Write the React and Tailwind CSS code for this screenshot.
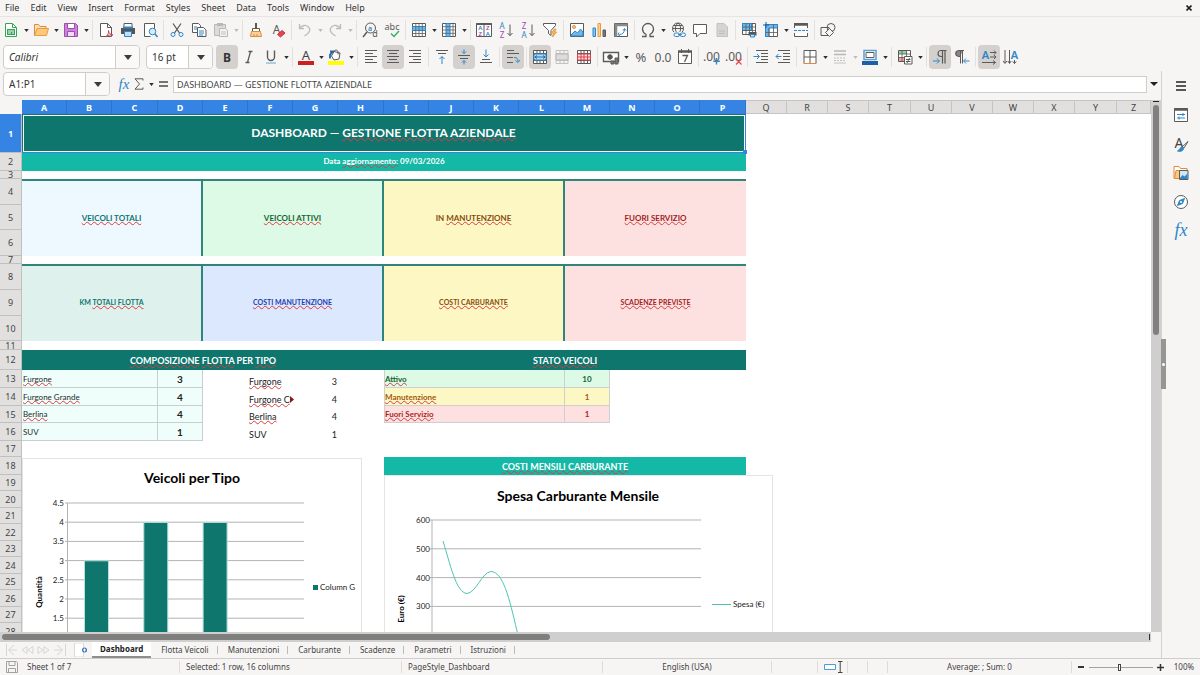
import { useState } from "react";

const MENUS = ["File", "Edit", "View", "Insert", "Format", "Styles", "Sheet", "Data", "Tools", "Window", "Help"];
const TABS = ["Dashboard", "Flotta Veicoli", "Manutenzioni", "Carburante", "Scadenze", "Parametri", "Istruzioni"];

// column widths A..Y, Z takes what is left
const COLS = [
  45, 45, 46, 45, 45, 45, 45, 46, 45, 45, 45, 46, 45, 45, 45, 46,
  41, 41, 41, 42, 41, 41, 41, 41, 42,
];
const LETTERS = "ABCDEFGHIJKLMNOPQRSTUVWXYZ".split("");
const ROW_HEIGHTS = [
  39, 18, 8, 26, 25, 26, 8, 26, 26, 25, 9, 20, 18, 18, 17, 18, 16, 18, 16, 17, 16, 17, 16, 17, 16, 17, 16, 17,
];

const G = "#5a5a58";
const B = "#2f86c8";

function Icon({ children, size = 16 }) {
  return (
    <svg width={size} height={size} viewBox="0 0 16 16" fill="none" stroke={G} strokeWidth="1" className="shrink-0 overflow-visible">
      {children}
    </svg>
  );
}

function T({ children, x = 8, y = 13, size = 14, fill = G, weight = 400, family = "Noto Sans", ...rest }) {
  return (
    <text x={x} y={y} fontSize={size} fill={fill} stroke="none" textAnchor="middle" fontFamily={`"${family}", sans-serif`} fontWeight={weight} {...rest}>
      {children}
    </text>
  );
}

const icons = {
  new: (
    <>
      <path d="M2.5 1.5h7l4 4v9h-11z" stroke="#35a455" fill="#fff" />
      <path d="M9.5 1.5v4h4" stroke="#35a455" />
      <path d="M4 7h8v6H4z" fill="#35a455" stroke="none" />
      <path d="M5 9h6M5 11h3M9 11h2" stroke="#fff" />
    </>
  ),
  open: (
    <>
      <path d="M1.5 13.5v-11h4l1.500 2h6v3" stroke="#e08a3c" fill="#fde3b4" />
      <path d="M1.500 13.500 4 6.500h11.500l-2 7z" stroke="#e89a4a" fill="#fbc978" />
    </>
  ),
  save: (
    <>
      <path d="M1.500 1.500h11l2 2v11h-13z" stroke="#9b4fb0" fill="#c983d8" />
      <path d="M4.500 1.500h7v5h-7z" fill="#fff" stroke="#9b4fb0" />
      <path d="M4.500 14.500v-5h7v5z" fill="#f1daf5" stroke="#9b4fb0" />
    </>
  ),
  pdf: (
    <>
      <path d="M2.500 1.500h7l4 4v9h-11z" fill="#fff" />
      <path d="M9.500 1.500v4h4" />
      <path d="M8 14.500c2-1.500 3-4 2.500-6 0 2.500 2 4.500 4.500 4.500-2.500-.5-5 .3-7 1.500z" stroke="#d8404a" />
    </>
  ),
  print: (
    <>
      <path d="M4 6V1.500h8V6" fill="#fff" />
      <path d="M1 6h14v6H1z" fill="#555" stroke="none" />
      <path d="M3 4.500h10v2H3z" fill={B} stroke="none" />
      <path d="M4.500 9.500h7v5h-7z" fill="#bfe0f5" stroke={B} />
    </>
  ),
  preview: (
    <>
      <path d="M12.500 7V1.500h-10v13h6" fill="#fff" />
      <circle cx="10.500" cy="9.500" r="3.300" stroke={B} fill="#d5ebf8" />
      <path d="m13 12 2.500 3" stroke={B} strokeWidth="1.500" />
    </>
  ),
  cut: (
    <>
      <path d="M4 1.500 10.500 11M12 1.500 5.500 11" strokeWidth="1.300" />
      <circle cx="4" cy="12.500" r="2" stroke={B} />
      <circle cx="12" cy="12.500" r="2" stroke={B} />
    </>
  ),
  copy: (
    <>
      <path d="M1.500 1.500h6l2 2v7h-8z" fill="#fff" />
      <path d="M3 5h3M3 7h3" stroke={B} />
      <path d="M6.500 5.500h6l2.500 2.500v6.500H6.500z" fill="#fff" />
      <path d="M8 9h5M8 11h5M8 13h4" stroke={B} />
    </>
  ),
  paste: (
    <>
      <path d="M1.500 2.500h11v11h-11z" fill="#dcdbd9" stroke="#b9b8b6" />
      <path d="M4 1h6v3H4z" fill="#b9b8b6" stroke="none" />
      <path d="M6.500 6.500h6l2 2v6h-8z" fill="#f3f2f1" stroke="#b9b8b6" />
      <path d="M8 10h5M8 12h5" stroke="#c4c3c1" />
    </>
  ),
  clone: (
    <>
      <path d="M8 1v6" strokeWidth="2" />
      <path d="M4.500 6.500h7v3h-7z" fill="#fff" />
      <path d="M3.500 9.500h9l1 5h-11z" fill="#fbd09a" stroke="#e08a3c" />
      <path d="M6 12v2M9 12v2" stroke="#e08a3c" />
    </>
  ),
  clear: (
    <>
      <T x={6.500} y={12} size={12}>A</T>
      <path d="m7.500 12.500 4.500-4 3 2.500-4.500 4z" fill="#e5484f" stroke="#c8323c" />
    </>
  ),
  undo: <path d="M2.500 2v4.500H7M2.500 6.500C5 3 9 2.500 11.500 5s1.500 6-4 9" stroke="#bdbcba" strokeWidth="1.300" />,
  redo: <path d="M13.500 2v4.500H9M13.500 6.500C11 3 7 2.500 4.500 5s-1.500 6 4 9" stroke="#bdbcba" strokeWidth="1.300" />,
  find: (
    <>
      <circle cx="8.500" cy="6" r="5" />
      <path d="M5 10 1 15" strokeWidth="1.500" />
      <T x={8} y={8.500} size={7} fill={B} weight={600}>a</T>
      <T x={13} y={15} size={9}>d</T>
    </>
  ),
  spell: (
    <>
      <T x={8} y={8} size={9}>abc</T>
      <path d="m7 11.500 3 3 5-5.500" stroke="#2fae5c" strokeWidth="1.300" />
    </>
  ),
  row: (
    <>
      <path d="M1.500 1.500h13v13h-13z" fill="#fff" />
      <path d="M1.500 4.500h13v4h-13z" fill="#6db7ea" stroke={B} />
      <path d="M1.500 11.500h13M4.800 1.500v13M8 1.500v13M11.300 1.500v13" strokeWidth=".8" />
    </>
  ),
  col: (
    <>
      <path d="M1.500 1.500h13v13h-13z" fill="#fff" />
      <path d="M5 1.500h4v13H5z" fill="#6db7ea" stroke={B} />
      <path d="M1.500 4.700h13M1.500 8h13M1.500 11.300h13M12 1.500v13" strokeWidth=".8" />
    </>
  ),
  sort: (
    <>
      <path d="M.5 1.500h15v13H.5z" fill="#fff" />
      <path d="M.5 2h15" strokeWidth="2" />
      <path d="M8 1.500v13" />
      <T x={4.300} y={8} size={6} fill={B} weight={600}>A</T>
      <T x={4.300} y={14} size={6} fill="#a348b5" weight={600}>Z</T>
      <T x={11.800} y={8} size={6} fill="#a348b5" weight={600}>Z</T>
      <T x={11.800} y={14} size={6} fill={B} weight={600}>A</T>
    </>
  ),
  asc: (
    <>
      <T x={4} y={7} size={8} fill={B}>A</T>
      <T x={4} y={15.500} size={8} fill="#a348b5">Z</T>
      <path d="M12 2.500v11M9.500 11l2.500 2.700L14.500 11" />
    </>
  ),
  desc: (
    <>
      <T x={4} y={7} size={8} fill="#a348b5">Z</T>
      <T x={4} y={15.500} size={8} fill={B}>A</T>
      <path d="M12 2.500v11M9.500 11l2.500 2.700L14.500 11" />
    </>
  ),
  filter: (
    <>
      <path d="M1.500 1.500h12v2L9 8.500v5l-2.500-2v-3l-5-5z" fill="#fff" />
      <path d="m12.500 7-3 4h2l-1 4 4-5h-2l1.500-3z" fill="#fbc26b" stroke="#e89a3a" />
    </>
  ),
  image: (
    <>
      <path d="M1.500 1.500h13v13h-13z" fill="#fff" />
      <path d="m2 13 4-4 2.500 2 3-4 2.500 3v4H2z" fill="#6db7ea" stroke={B} />
      <circle cx="5" cy="5" r="1.500" stroke="#e08a3c" fill="#fbd09a" />
    </>
  ),
  chart: (
    <>
      <path d="M2 6h2.500v8.500H2z" fill="#8cc6ee" stroke={B} />
      <path d="M7 1.500h2.500v13H7z" fill="#fbd09a" stroke="#e89a3a" />
      <path d="M12 8h2.500v6.500H12z" fill="#777" />
    </>
  ),
  pivot: (
    <>
      <path d="M1.500 1.500h13v13h-13z" fill="#fff" />
      <path d="M1.500 3h13M3 1.500v13" strokeWidth="2.500" stroke="#8a8a88" />
      <path d="M6.500 12.500c3 0 5-2 5-5.500M6 10.500l-1 2 2 1.500M10 8.500l1.500-2 1.500 2" stroke={B} />
    </>
  ),
  omega: <path d="M2 14.500h4v-2C3.500 11 2.500 9 2.500 7a5.500 5.500 0 0 1 11 0c0 2-1 4-3.500 5.500v2h4" strokeWidth="1.300" />,
  link: (
    <>
      <circle cx="8" cy="6.500" r="5.500" />
      <path d="M2.500 6.500h11M8 1c-3.500 3-3.500 8 0 11M8 1c3.500 3 3.500 8 0 11M3.500 3.500h9" />
      <path d="M3.500 10h12v5h-12z" fill="#f6f5f4" stroke="none" />
      <rect x="4" y="11" width="5.500" height="3.500" rx="1.700" stroke={B} />
      <rect x="10" y="11" width="5.500" height="3.500" rx="1.700" stroke={B} />
      <path d="M8 12.700h4" stroke={B} />
    </>
  ),
  comment: <path d="M1.500 2.500h13v9H8l-3.500 3.500v-3.500h-3z" fill="#fff" />,
  page: (
    <>
      <path d="M3 1.500h7l3.500 3.500v9.500H3z" fill="#d5d4d2" stroke="#c3c2c0" />
      <path d="M5 9h6M5 11.500h6" stroke="#bdbcba" />
    </>
  ),
  printArea: (
    <>
      <path d="M1.500 1.500h13v11h-13z" fill="#fff" />
      <path d="M1.500 1.500h9v7h-9z" fill="#6db7ea" stroke={B} />
      <path d="M1.500 5h13M1.500 8.500h13M5 1.500v11M8.500 1.500v11M11.500 1.500v11" strokeWidth=".8" />
      <path d="M7.500 10h8v3.500h-8z" fill="#555" stroke="none" />
      <path d="M9.500 12.500h4v2.500h-4z" fill="#bfe0f5" stroke={B} />
    </>
  ),
  freeze: (
    <>
      <path d="M2.500 2.500h12v12h-12z" fill="#fff" />
      <path d="M2.500 2.500h12v3.500h-8.500v8.500h-3.500z" fill="#6db7ea" stroke={B} />
      <path d="M6 6v8.500M10.500 2.500v12M6 10.500h8.500M2.500 10.500h3.500" strokeWidth=".8" />
      <path d="M3 0v6M0 3h6" stroke="#1e5f9c" />
    </>
  ),
  split: (
    <>
      <path d="M1.500 6V1.500h13V6M1.500 11v3.500h13V11" fill="#fff" />
      <path d="M1 2.500h14" strokeWidth="2.500" />
      <path d="M1 8.500h14" stroke={B} strokeDasharray="3 1" />
    </>
  ),
  shapes: (
    <>
      <path d="M1 5.500h8v8H1z" fill="#f6f5f4" />
      <circle cx="11" cy="5.500" r="4" />
      <path d="m9.500 6.500 4 4-4 4-4-4z" fill="#f6f5f4" />
    </>
  ),
  bold: <T x={8} y={12.500} size={12} weight={700} fill="#333">B</T>,
  italic: <path d="M7.500 2.500h4M4.500 13.500h4M9.500 2.500l-3 11" strokeWidth="1.300" />,
  underline: (
    <>
      <path d="M4.500 1.500V8a3.500 3.500 0 0 0 7 0V1.500" strokeWidth="1.400" />
      <path d="M3 14h10" stroke="#62a8de" />
    </>
  ),
  fontColor: (
    <>
      <T x={8} y={10.500} size={13} fill="#444">A</T>
      <path d="M0 14h16" stroke="#c9211e" strokeWidth="4" />
    </>
  ),
  highlight: (
    <>
      <path d="m6 2.500 6 1.500-1 6-5 1-2.500-4z" fill="#fff" />
      <path d="M6 2.500c2-3 5-1 4 3" />
      <path d="M2 2.500h3l-3 3v4" stroke="#1e6ca8" strokeWidth="1.800" />
      <path d="M0 14h16" stroke="#ffff00" strokeWidth="4" />
    </>
  ),
  left: <path d="M2 1.500h12M2 4.500h8M2 7.500h12M2 10.500h8M2 13.500h12" />,
  center: <path d="M2 1.500h12M4 4.500h8M2 7.500h12M4 10.500h8M2 13.500h12" />,
  right: <path d="M2 1.500h12M6 4.500h8M2 7.500h12M6 10.500h8M2 13.500h12" />,
  top: (
    <>
      <path d="M2 1.500h12M4 4.500h8" />
      <path d="M8 15V7.500M5.500 10 8 7.500l2.500 2.500" stroke={B} />
    </>
  ),
  middle: (
    <>
      <path d="M2 6.500h12M4 9.500h8" />
      <path d="M8 .5v4M6 2.500l2 2 2-2M8 15.500v-4M6 13.500l2-2 2 2" stroke={B} />
    </>
  ),
  bottom: (
    <>
      <path d="M4 10.500h8M2 13.500h12" />
      <path d="M8 .5V8M5.500 5.500 8 8l2.500-2.500" stroke={B} />
    </>
  ),
  wrap: (
    <>
      <path d="M2 1.500h7M2 4.500h12M2 8.500h6M2 13.500h6" />
      <path d="M9 8.500c3 0 4 1 4 4M10.500 11.500l2.500 2 2-2.500" stroke={B} />
    </>
  ),
  merge: (
    <>
      <path d="M1.500 1.500h13v13h-13z" fill="#fff" />
      <path d="M1.500 4.500h13M1.500 11.500h13M5 1.500v3M8 1.500v3M11.500 1.500v3M5 11.500v3M8 11.500v3M11.500 11.500v3" />
      <path d="M2 5h12v6H2z" fill="#b5daf3" stroke={B} />
      <path d="M3 8h10M5 6.500 3 8l2 1.500M11 6.500 13 8l-2 1.500" stroke="#1e6ca8" />
    </>
  ),
  mergeOff: (
    <>
      <path d="M2 1.500h12v13H2z" stroke="#c3c2c0" />
      <path d="M2 4.500h12M2 11.500h12M6 1.500v3M10 1.500v3M6 11.500v3M10 11.500v3" stroke="#c3c2c0" />
      <path d="M2 5h12v6H2z" fill="#dddcda" stroke="#b9b8b6" />
    </>
  ),
  unmerge: (
    <>
      <path d="M1.500 1.500h13v13h-13z" fill="#fff" />
      <path d="M1.500 4.500h13M1.500 11.500h13M5 1.500v3M8 1.500v3M11.500 1.500v3M5 11.500v3M8 11.500v3M11.500 11.500v3" />
      <path d="M1.500 5h13v6h-13zM5 5v6M8 5v6M11.500 5v6M1.500 8h13" stroke="#d8404a" fill="#fbe0e1" />
    </>
  ),
  currency: (
    <>
      <path d="M.5 3.500h15v9H.5z" fill="#fff" strokeWidth="1.400" />
      <circle cx="7" cy="8" r="2.300" fill="#555" />
      <path d="M8 15v-3h3v3zM12 15V9h3v6z" fill="#777" />
    </>
  ),
  percent: <T x={8} y={13} size={13}>%</T>,
  number: <T x={8} y={13} size={12}>0.0</T>,
  date: (
    <>
      <path d="M1.500 2.500h13v12h-13z" fill="#fff" />
      <path d="M1 2.500h14" strokeWidth="2.500" />
      <path d="M4.500 0v4M11.500 0v4" />
      <path d="M5.500 6.500h5l-3 6.500" strokeWidth="1.300" />
    </>
  ),
  addDec: (
    <>
      <T x={7.500} y={12} size={12}>.00</T>
      <path d="M12.500 9v6.500M9.300 12.300h6.500" stroke={B} strokeWidth="1.400" />
    </>
  ),
  delDec: (
    <>
      <T x={7.500} y={12} size={12}>.00</T>
      <path d="m10 10 5.500 5.500M15.500 10 10 15.500" stroke="#e5484f" strokeWidth="1.200" />
    </>
  ),
  indent: (
    <>
      <path d="M3 1.500h12M8 4.500h7M8 7.500h7M8 10.500h7M3 13.500h12" />
      <path d="M.5 7.500h5.500M4 5l2.500 2.500L4 10" stroke={B} />
    </>
  ),
  outdent: (
    <>
      <path d="M3 1.500h12M8 4.500h7M8 7.500h7M8 10.500h7M3 13.500h12" />
      <path d="M6.500 7.500H1M3.500 5 1 7.500 3.500 10" stroke={B} />
    </>
  ),
  borders: (
    <>
      <path d="M2 14V1.500h12V14M2 8h12M8 1.500V14" fill="#fff" />
      <path d="M1.500 14.500h13" stroke="#e08a3c" />
    </>
  ),
  lineStyle: (
    <>
      <path d="M2 2h12M2 5.500h12" stroke="#b9b8b6" strokeWidth="1.600" />
      <path d="M2 9h12M2 11.500h12" stroke="#c3c2c0" strokeDasharray="2 1" />
      <path d="M2 14h12" stroke="#c3c2c0" />
    </>
  ),
  lineColor: (
    <>
      <path d="M2 1.500h12v9H2z" fill="#fff" stroke="#5d9fd2" strokeWidth="1.500" />
      <path d="M4 3.500h8v5H4z" />
      <path d="M0 14h16" stroke="#1f5fa5" strokeWidth="4" />
    </>
  ),
  conditional: (
    <>
      <path d="M1.500 1.500h12v11h-12z" fill="#fff" />
      <path d="M2 2h8v3H2z" fill="#8ed39b" stroke="none" />
      <path d="M2 8h5v4H2z" fill="#f1a0a3" stroke="none" />
      <path d="M1.500 5h12M1.500 8.500h12M5 1.500v11M9.500 1.500v11" strokeWidth=".8" />
      <path d="M7.500 7.500h7.500v7.500H7.500z" fill="#fff" />
      <path d="M9 10.500h4.500M9 12.500h4.500M12.500 9 10 14" />
    </>
  ),
  ltr: (
    <>
      <path d="M14.500 1.500H9a3 3 0 0 0 0 6h1M10.500 1.500v13M13 1.500v13" strokeWidth="1.200" />
      <path d="M1 12h6M5 9.500 7.500 12 5 14.500" stroke={B} />
    </>
  ),
  rtl: (
    <>
      <path d="M8.500 1.500H4a3 3 0 0 0 0 6h2.500z" fill="#888" stroke="none" />
      <path d="M10 1.500H5a3 3 0 0 0 0 6h1M6.500 1.500v13M8.500 1.500v13" />
      <path d="M15.500 12H10M12 9.500 9.500 12l2.500 2.500" stroke={B} />
    </>
  ),
  horiz: (
    <>
      <T x={4.500} y={10} size={11} fill={B} weight={600}>A</T>
      <path d="M9 3.500h6M13 1.500l2 2-2 2M9 8h6M13 6l2 2-2 2M1 13.500h13.500M12 11.500l2.500 2-2.500 2" />
    </>
  ),
  vert: (
    <>
      <T x={11.500} y={9.500} size={11} fill={B} weight={600}>A</T>
      <path d="M2 1v13M0 12l2 2.500L4 12M6.500 1v13M4.800 12l1.700 2.500 1.700-2.500M11.500 11v3.500M9.800 12.500l1.700 2 1.700-2" />
    </>
  ),
};

const BAR1 = [
  "new+", "open+", "save+", "|", "pdf", "print", "preview", "|", "cut", "copy", "paste-", "|", "clone", "clear", "|",
  "undo-", "redo-", "|", "find", "spell", "|", "row+", "col+", "|", "sort", "asc", "desc", "filter", "|", "image",
  "chart", "pivot", "|", "omega+", "link", "comment", "page", "|", "printArea", "freeze+", "split", "|", "shapes",
];
const BAR2 = [
  "*bold", "italic", "underline+", "|", "fontColor+", "highlight+", "|", "left", "*center", "right", "|", "top",
  "*middle", "bottom", "|", "*wrap", "|", "*merge", "mergeOff", "unmerge", "|", "currency+", "percent", "number",
  "date", "|", "addDec", "delDec", "|", "indent", "outdent", "|", "borders+", "lineStyle-", "lineColor+", "|",
  "conditional+", "|", "*ltr", "rtl", "|", "*horiz", "vert",
];

function Caret({ className = "text-[#2e2e2e]" }) {
  return (
    <svg width="5" height="3" viewBox="0 0 6 4" className={className}>
      <path d="M0 0h6L3 4z" fill="currentColor" />
    </svg>
  );
}

// "+" after a name adds an arrow, "-" a disabled arrow, "*" before it means pressed
function ToolItem({ item }) {
  if (item === "|") {
    return (
      <span className="w-[5px] flex justify-center shrink-0">
        <span className="w-px h-5 bg-[#e3e1df]" />
      </span>
    );
  }
  const pressed = item.startsWith("*");
  const name = item.replace(/[*+-]/g, "");
  const arrow = item.endsWith("+") || item.endsWith("-");
  const off = item.endsWith("-");
  return (
    <>
      <button
        type="button"
        aria-label={name}
        aria-pressed={pressed}
        className={`w-[22px] h-6 flex items-center justify-center rounded shrink-0 ${pressed ? "bg-[#d3d0cd]" : ""}`}
      >
        <Icon>{icons[name]}</Icon>
      </button>
      {arrow && (
        <button type="button" aria-label={`${name} options`} disabled={off} className="w-2 h-6 flex items-center justify-center shrink-0">
          <Caret className={off ? "text-[#bdbcba]" : "text-[#2e2e2e]"} />
        </button>
      )}
    </>
  );
}

function Combo({ label, value, width, italic }) {
  return (
    <div className={`flex h-6 bg-white border border-[#cfccc9] rounded shrink-0 overflow-hidden ${width}`}>
      <input aria-label={label} defaultValue={value} className={`flex-1 min-w-0 pl-[5px] text-[10px] text-[#333] outline-none ${italic ? "italic" : ""}`} />
      <button type="button" aria-label={`${label} list`} className="w-6 border-l border-[#cfccc9] bg-[#faf9f8] flex items-center justify-center">
        <svg width="8" height="5" viewBox="0 0 8 5">
          <path d="M0 0h8L4 5z" fill="#3c3c3c" />
        </svg>
      </button>
    </div>
  );
}

function Wavy({ children }) {
  return <span className="underline decoration-wavy decoration-[#dc3c3e] decoration-1 underline-offset-0 [text-decoration-skip-ink:none]">{children}</span>;
}

function Kpi({ text, plain, className }) {
  return (
    <td colSpan={4} rowSpan={3} className={`border-t-2 border-[#2f857c] text-center font-bold ${className}`}>
      <div className="pb-[2px]">
        {plain} <Wavy>{text}</Wavy>
      </div>
    </td>
  );
}

function Empty({ span = 1 }) {
  return <td colSpan={span} />;
}

const KPI_1 = [
  { text: "VEICOLI TOTALI", className: "border-r-2 text-[8px] bg-[#eef8ff] text-[#0f766e]" },
  { text: "VEICOLI ATTIVI", className: "border-r-2 text-[8px] bg-[#dcfae5] text-[#166534]" },
  { plain: "IN", text: "MANUTENZIONE", className: "border-r-2 text-[8px] bg-[#fdf7c4] text-[#854d0e]" },
  { text: "FUORI SERVIZIO", className: "text-[8px] bg-[#fde1e1] text-[#a11d1d]" },
];
const KPI_2 = [
  { plain: "KM", text: "TOTALI FLOTTA", className: "border-r-2 text-[7px] bg-[#dff1ed] text-[#0f766e]" },
  { text: "COSTI MANUTENZIONE", className: "border-r-2 text-[7px] bg-[#dbe8fe] text-[#1e40af]" },
  { text: "COSTI CARBURANTE", className: "border-r-2 text-[7px] bg-[#fdf7c4] text-[#854d0e]" },
  { text: "SCADENZE PREVISTE", className: "text-[7px] bg-[#fde1e1] text-[#a11d1d]" },
];
const TIPI = [
  ["Furgone", 3],
  ["Furgone Grande", 4],
  ["Berlina", 4],
  ["SUV", 1],
];
const STATI = [
  ["Attivo", 10, "bg-[#dcfae5] text-[#166534]"],
  ["Manutenzione", 1, "bg-[#fdf7c4] text-[#a1570e]"],
  ["Fuori Servizio", 1, "bg-[#fde1e1] text-[#b01c1c]"],
];

function TipoRow({ i }) {
  const [tipo, n] = TIPI[i];
  const stato = STATI[i];
  const label = tipo === "SUV" ? tipo : <Wavy>{tipo}</Wavy>;
  return (
    <>
      <td colSpan={3} className="bg-[#effefb] border-r border-b border-[#c9cfce] text-[8px] text-[#1d2b2a]">
        <div className="pl-px">{label}</div>
      </td>
      <td className="bg-[#effefb] border-r border-b border-[#c9cfce] text-center text-[10px] font-bold text-[#222]">{n}</td>
      <Empty />
      <td className="align-bottom text-[9px] text-[#222]">
        <div className="flex items-center pl-px pb-[2px]">
          {tipo === "Furgone Grande" ? (
            <>
              <Wavy>Furgone C</Wavy>
              <svg width="4" height="7" viewBox="0 0 4 7" className="shrink-0">
                <path d="M0 0v7l4-3.500z" fill="#8c1616" />
              </svg>
            </>
          ) : (
            label
          )}
        </div>
      </td>
      <td className="align-bottom text-right text-[9px] text-[#222]">
        <div className="pr-px pb-[2px]">{n}</div>
      </td>
      <Empty />
      {stato ? (
        <>
          <td colSpan={4} className={`border-r border-b border-l border-[#cfcfcf] text-[8px] font-bold ${stato[2]}`}>
            <Wavy>{stato[0]}</Wavy>
          </td>
          <td className={`border-r border-b border-[#cfcfcf] text-center text-[8px] font-bold ${stato[2]}`}>{stato[1]}</td>
          <Empty span={13} />
        </>
      ) : (
        <Empty span={18} />
      )}
    </>
  );
}

function rowCells(n) {
  switch (n) {
    case 1:
      return (
        <>
          <td colSpan={16} className="relative bg-[#0f766e] text-white text-center text-[12px] font-bold outline outline-1 outline-white -outline-offset-2 border-b-2 border-r border-[#3584e4]">
            DASHBOARD — <Wavy>GESTIONE FLOTTA AZIENDALE</Wavy>
            <span className="absolute -right-[2px] -bottom-[3px] size-1 bg-[#3584e4]" />
          </td>
          <Empty span={10} />
        </>
      );
    case 2:
      return (
        <>
          <td colSpan={16} className="bg-[#14b8a6] text-white text-center text-[8px] font-bold">
            <div className="pb-[2px]">
              Data <Wavy>aggiornamento:</Wavy> 09/03/2026
            </div>
          </td>
          <Empty span={10} />
        </>
      );
    case 4:
    case 8:
      return (
        <>
          {(n === 4 ? KPI_1 : KPI_2).map((k) => (
            <Kpi key={k.text} {...k} />
          ))}
          <Empty span={10} />
        </>
      );
    case 5:
    case 6:
    case 9:
    case 10:
      return <Empty span={10} />;
    case 12:
      return (
        <>
          <td colSpan={8} className="bg-[#0f766e] text-white text-center text-[9px] font-bold">
            <Wavy>COMPOSIZIONE</Wavy> <Wavy>FLOTTA</Wavy> PER <Wavy>TIPO</Wavy>
          </td>
          <td colSpan={8} className="bg-[#0f766e] text-white text-center text-[9px] font-bold">
            <Wavy>STATO VEICOLI</Wavy>
          </td>
          <Empty span={10} />
        </>
      );
    case 13:
    case 14:
    case 15:
    case 16:
      return <TipoRow i={n - 13} />;
    case 18:
      return (
        <>
          <Empty span={8} />
          <td colSpan={8} className="bg-[#14b8a6] text-white text-center text-[9px] font-bold">
            <Wavy>COSTI MENSILI CARBURANTE</Wavy>
          </td>
          <Empty span={10} />
        </>
      );
    default:
      return <Empty span={26} />;
  }
}

function BarChart() {
  const step = 19.2;
  const ticks = ["4.5", "4", "3.5", "3", "2.5", "2", "1.5"];
  const values = [3, 4, 4];
  return (
    <svg width="341" height="260" fontFamily="Lato, sans-serif" fill="#222">
      <rect x=".5" y=".5" width="339" height="259" fill="#fff" stroke="#e4e4e4" />
      <text x="170" y="25" fontSize="14" fontWeight="700" textAnchor="middle" fill="#000">Veicoli per Tipo</text>
      {ticks.map((t, i) => (
        <g key={t}>
          <path d={`M43 ${45 + i * step}H282`} stroke="#b3b3b3" />
          <text x="42" y={48 + i * step} fontSize="8" textAnchor="end">{t}</text>
        </g>
      ))}
      <path d="M45.500 45V218" stroke="#b3b3b3" />
      {values.map((v, i) => (
        <rect key={i} x={62.500 + i * 59.300} y={218 - v * 2 * step} width="24" height={v * 2 * step} fill="#0f766e" stroke="#b5e0db" />
      ))}
      <text transform="translate(20 134) rotate(-90)" fontSize="8" fontWeight="700" textAnchor="middle" fill="#000">Quantità</text>
      <rect x="291" y="127" width="5" height="5" fill="#0f766e" />
      <text x="298" y="132" fontSize="8">Column G</text>
    </svg>
  );
}

function LineChart() {
  const step = 28.800;
  const ticks = [600, 500, 400, 300, 200];
  return (
    <svg width="389" height="260" fontFamily="Lato, sans-serif" fill="#222">
      <rect x=".5" y=".5" width="388" height="259" fill="#fff" stroke="#e4e4e4" />
      <text x="194" y="26" fontSize="14" fontWeight="700" textAnchor="middle" fill="#000">Spesa Carburante Mensile</text>
      {ticks.map((t, i) => (
        <g key={t}>
          <path d={`M46 ${45 + i * step}H317`} stroke="#b3b3b3" />
          <text x="46" y={48 + i * step} fontSize="8" textAnchor="end">{t}</text>
        </g>
      ))}
      <path d="M48 45V218" stroke="#b3b3b3" />
      <path d="M59 66C66 88 72 118 83 118.500C92 118 98 97 107 96.500C119 97 125 122 133 156L138 180" stroke="#4fc4b4" fill="none" />
      <text transform="translate(20 134) rotate(-90)" fontSize="8" fontWeight="700" textAnchor="middle" fill="#000">Euro (€)</text>
      <path d="M328 129.500h19" stroke="#4fc4b4" />
      <text x="349" y="132" fontSize="8">Spesa (€)</text>
    </svg>
  );
}

function Sheet() {
  return (
    <div className="relative flex-1 min-w-0 overflow-hidden bg-white">
      <table className="w-full table-fixed border-separate border-spacing-0 font-['Lato',sans-serif] [&_td]:p-0 [&_td]:leading-none [&_td]:whitespace-nowrap">
        <colgroup>
          <col className="w-[22px]" />
          {COLS.map((w, i) => (
            <col key={i} style={{ width: w }} />
          ))}
          <col />
        </colgroup>
        <thead className="font-['Noto_Sans',sans-serif] text-[9px] leading-none">
          <tr className="h-[14px]">
            <th className="bg-[#f6f5f4] p-0" />
            {LETTERS.map((l, i) => (
              <th
                key={l}
                scope="col"
                className={`p-0 border-r ${i < 16 ? "bg-[#3584e4] border-[#2f74c8] text-white font-bold" : "bg-[#e1e0df] border-[#c4c4c4] border-t border-b text-[#444] font-normal"}`}
              >
                {l}
              </th>
            ))}
          </tr>
        </thead>
        <tbody>
          {ROW_HEIGHTS.map((h, i) => (
            <tr key={i} style={{ height: h }}>
              <th
                scope="row"
                className={`p-0 border-r border-b border-[#c0c0c0] font-['Noto_Sans',sans-serif] text-[9px] leading-none ${i === 0 ? "bg-[#3584e4] text-white font-bold" : "bg-[#e1e0df] text-[#444] font-normal"}`}
              >
                <div className="flex items-center justify-center overflow-hidden" style={{ height: h - 1 }}>
                  {i + 1}
                </div>
              </th>
              {rowCells(i + 1)}
            </tr>
          ))}
        </tbody>
      </table>
      {/* floating chart objects */}
      <div className="absolute left-[22px] top-[358px]">
        <BarChart />
      </div>
      <div className="absolute left-[384px] top-[375px]">
        <LineChart />
      </div>
    </div>
  );
}

function FormulaBar() {
  return (
    <div className="flex items-center h-[29px] pl-[3px] pb-[3px] shrink-0">
      <Combo label="Name Box" value="A1:P1" width="w-[107px]" />
      <div className="flex items-center pl-[6px] pr-[2px]">
        <button type="button" aria-label="Function Wizard" className="w-4 text-[15px] leading-none italic text-[#2f86c8] font-['Liberation_Serif',serif]">fx</button>
        <button type="button" aria-label="Select Function" className="w-[14px] flex justify-center">
          <svg width="10" height="12" viewBox="0 0 10 12" fill="none" stroke="#5a5a58">
            <path d="M9 2.500V.8H1L5.500 6 1 11.200h8V9.500" />
          </svg>
        </button>
        <span className="w-[10px] flex justify-center"><Caret /></span>
        <button type="button" aria-label="Formula" className="w-[15px] flex justify-center">
          <svg width="9" height="6" viewBox="0 0 9 6" stroke="#4a4a48" strokeWidth="1.500">
            <path d="M0 1h9M0 5h9" />
          </svg>
        </button>
      </div>
      <input
        aria-label="Input line"
        defaultValue="DASHBOARD — GESTIONE FLOTTA AZIENDALE"
        className="flex-1 min-w-0 h-[17px] bg-white border border-[#cfccc9] pl-[3px] text-[9px] text-[#444] outline-none"
      />
      <button type="button" aria-label="Expand formula bar" className="w-[14px] flex justify-center">
        <svg width="8" height="4" viewBox="0 0 8 4">
          <path d="M0 0h8L4 4z" fill="#222" />
        </svg>
      </button>
    </div>
  );
}

function Sidebar() {
  const items = [
    ["Sidebar Settings", <path key="a" d="M3 4h10M3 8h10M3 12h10" stroke="#222" strokeWidth="1.500" />],
    [
      "Properties",
      <g key="b">
        <path d="M1.500 1.500h13v13h-13z" fill="#fff" />
        <path d="M1 2.500h14" strokeWidth="2.500" />
        <path d="M4 7.500h8M4 11h8M10 6v3M6 9.500v3" stroke={B} />
      </g>,
    ],
    [
      "Styles",
      <g key="c">
        <T x={6} y={12} size={14} fill="#444">A</T>
        <path d="m9 11 6-5.500-4 6.500z" fill="#fff" />
        <path d="M4.500 15c2.500 1 6 0 6-2.500L8.500 11c-1.500.5-1.500 3-4 4z" fill={B} stroke={B} />
      </g>,
    ],
    [
      "Gallery",
      <g key="d">
        <path d="M1 13.500v-12h5l1.500 2H14v2" stroke="#e08a3c" fill="#fff" />
        <path d="M1.500 13.500 3 5.500h4v8z" fill="#fbc978" stroke="#e08a3c" />
        <path d="M6.500 5.500h8.500v9H6.500z" fill="#cfe7f7" />
        <path d="m7 13 2.500-3 2 1.500 3-3V14H7z" fill={B} stroke="none" />
      </g>,
    ],
    [
      "Navigator",
      <g key="e">
        <circle cx="8" cy="8" r="6.500" fill="#fff" />
        <path d="m11.500 4.500-2 5-5 2 2-5z" fill={B} stroke={B} />
        <circle cx="8" cy="8" r="1" fill="#fff" stroke="none" />
      </g>,
    ],
    ["Functions", <T key="f" x={8} y={13} size={18} fill={B} family="Liberation Serif" fontStyle="italic">fx</T>],
  ];
  return (
    <aside className="w-[39px] shrink-0 border-l border-[#d5d3d1] relative flex flex-col">
      {items.map(([name, icon]) => (
        <button key={name} type="button" aria-label={name} className="h-[29px] flex items-center justify-center">
          <Icon>{icon}</Icon>
        </button>
      ))}
      <span className="absolute -left-px top-[268px] h-[50px] w-[5px] bg-[#969594] flex items-center justify-center">
        <span className="size-[3px] rounded-full bg-white" />
      </span>
    </aside>
  );
}

function SheetTabs() {
  const [active, setActive] = useState("Dashboard");
  return (
    <div className="flex h-4 items-stretch text-[8px] text-[#444] shrink-0">
      <div className="flex items-center w-[74px] pl-[6px] text-[#d6d5d3]">
        <svg width="60" height="12" viewBox="0 0 60 12" fill="none" stroke="currentColor">
          <path d="M.5 0v12M8 1 2.500 6 8 11M3 6h8M21 2.500l-5 3.500 5 3.500zM27 2.500l-5 3.500 5 3.500zM32 2.500l5 3.500-5 3.500zM38 2.500l5 3.500-5 3.500zM51 1l5.500 5-5.500 5M48 6h8M59.500 0v12" />
        </svg>
      </div>
      <button type="button" aria-label="Add sheet" className="w-[18px] flex items-center">
        <svg width="14" height="14" viewBox="0 0 14 14" fill="none">
          <path d="M.5 0h9v14h-9z" fill="#fff" stroke="#dcdad8" />
          <circle cx="10.500" cy="7" r="2.500" fill="#3b6fc4" />
          <path d="M10.500 5.500v3M9 7h3" stroke="#fff" />
        </svg>
      </button>
      {TABS.map((t) => (
        <button
          key={t}
          type="button"
          onClick={() => setActive(t)}
          className={t === active ? "bg-white font-bold text-[#222] px-2 border-b-2 border-[#8f8e8d] leading-none" : "flex items-center pl-[10px]"}
        >
          {t}
          {t !== active && <span className="ml-2 w-px h-2 bg-[#bdbbb9]" />}
        </button>
      ))}
    </div>
  );
}

function StatusBar() {
  const cell = "flex items-center border-r border-[#dedcda] h-3";
  return (
    <footer className="flex items-center h-[17px] border-t border-[#d0cecc] text-[8px] text-[#444] shrink-0 whitespace-nowrap">
      <div className={`${cell} w-[180px] pl-[6px] gap-[9px]`}>
        <svg width="12" height="12" viewBox="0 0 12 12" fill="none" stroke="#a3a2a0">
          <path d="M.5.5h10l1 1v10H.5zM3 .5v4h6v-4M2.500 11.500v-4h7v4" />
        </svg>
        Sheet 1 of 7
      </div>
      <div className={`${cell} w-[222px] pl-[6px]`}>Selected: 1 row, 16 columns</div>
      <div className={`${cell} w-[201px] pl-[6px]`}>PageStyle_Dashboard</div>
      <div className={`${cell} w-[169px] justify-center`}>English (USA)</div>
      <div className={`${cell} w-[46px]`} />
      <div className={`${cell} w-[30px] justify-end pr-1`}>
        <svg width="19" height="12" viewBox="0 0 19 12" fill="none">
          <path d="M.5 3.500h11v5H.5z" stroke="#4d9fd0" fill="#fff" />
          <path d="M14 .5h4.500M14 11.500h4.500M16.200.5v11" stroke="#444" />
        </svg>
      </div>
      <div className={`${cell} w-5`} />
      <div className={`${cell} w-5`} />
      <div className={`${cell} flex-1 justify-center`}>Average: ; Sum: 0</div>
      <div className="flex items-center w-24 justify-between pl-[6px] pr-1">
        <button type="button" aria-label="Zoom out" className="w-[6px] h-[2px] bg-[#333]" />
        <input
          type="range"
          aria-label="Zoom"
          defaultValue="49"
          className="w-16 h-px appearance-none bg-[#a5a3a1] [&::-webkit-slider-thumb]:appearance-none [&::-webkit-slider-thumb]:w-[3px] [&::-webkit-slider-thumb]:h-[7px] [&::-webkit-slider-thumb]:bg-white [&::-webkit-slider-thumb]:border [&::-webkit-slider-thumb]:border-[#444]"
        />
        <button type="button" aria-label="Zoom in">
          <svg width="7" height="7" viewBox="0 0 7 7" stroke="#333" strokeWidth="1.500">
            <path d="M0 3.500h7M3.500 0v7" />
          </svg>
        </button>
      </div>
      <div className="w-8 text-center">100%</div>
    </footer>
  );
}

function App() {
  return (
    <div className="flex flex-col h-screen overflow-hidden bg-[#f6f5f4] font-['Noto_Sans',sans-serif]">
      <nav className="flex items-center h-4 pl-[5px] pr-2 gap-[11px] text-[9px] text-[#333] shrink-0">
        {MENUS.map((m) => (
          <button key={m} type="button">{m}</button>
        ))}
        <button type="button" aria-label="Close" className="ml-auto">
          <svg width="6" height="6" viewBox="0 0 6 6" stroke="#222" strokeWidth="1.600">
            <path d="m.5.5 5 5M5.500.5l-5 5" />
          </svg>
        </button>
      </nav>
      <div className="flex items-center h-[27px] border-t border-[#e6e4e2] shrink-0">
        {BAR1.map((item, i) => (
          <ToolItem key={i} item={item} />
        ))}
      </div>
      <div className="flex items-center h-7 pl-[3px] shrink-0">
        <Combo label="Font Name" value="Calibri" width="w-[137px]" italic />
        <div className="pl-[6px] pr-[3px] flex">
          <Combo label="Font Size" value="16 pt" width="w-[67px]" />
        </div>
        {BAR2.map((item, i) => (
          <ToolItem key={i} item={item} />
        ))}
      </div>
      <div className="flex flex-1 min-h-0">
        <div className="flex flex-col flex-1 min-w-0">
          <FormulaBar />
          <div className="flex flex-1 min-h-0">
            <Sheet />
            <div className="w-[10px] bg-[#cfcfcf] shrink-0 pt-px flex flex-col items-center gap-[3px]">
              <span className="w-[6px] h-px bg-[#222]" />
              <span className="w-[6px] h-[230px] rounded-full bg-[#808080]" />
            </div>
          </div>
          <div className="h-[10px] bg-[#cfcfcf] shrink-0 flex items-center pl-[2px] mr-[10px]">
            <span className="w-[548px] h-[6px] rounded-full bg-[#7f807e]" />
            <span className="ml-auto mr-px w-px h-[6px] bg-[#333]" />
          </div>
          <SheetTabs />
        </div>
        <Sidebar />
      </div>
      <StatusBar />
    </div>
  );
}

export default App;
